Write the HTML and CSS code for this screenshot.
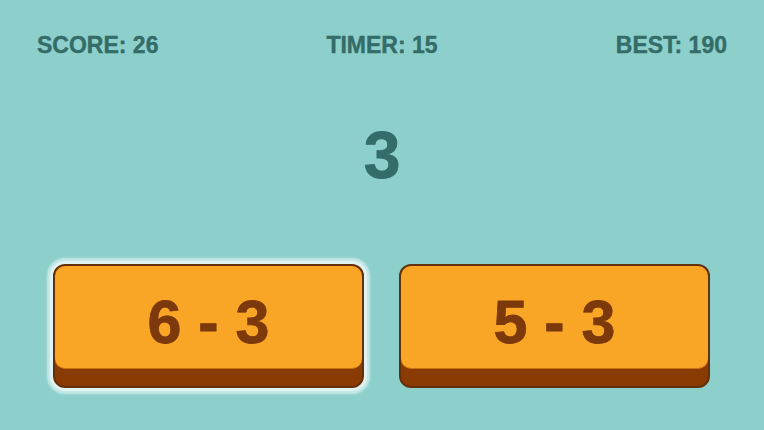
FILE: index.html
```html
<!DOCTYPE html>
<html>
<head>
<meta charset="utf-8">
<link rel="stylesheet" href="styles.css">
</head>
<body>
<div class="game">
  <div class="hud">
    <span class="stat stat-left">SCORE: 26</span>
    <span class="stat stat-mid">TIMER: 15</span>
    <span class="stat stat-right">BEST: 190</span>
  </div>
  <div class="target">3</div>
  <div class="choices">
    <div class="btn selected"><div class="face">6 - 3</div></div>
    <div class="btn"><div class="face">5 - 3</div></div>
  </div>
</div>
</body>
</html>
```
FILE: styles.css
```css
html, body {
  margin: 0;
  padding: 0;
}
body {
  width: 764px;
  height: 430px;
  overflow: hidden;
  background: #8dd0cb;
  font-family: "Liberation Sans", Arial, sans-serif;
}
.game {
  display: flex;
  flex-direction: column;
}
.hud {
  display: grid;
  grid-template-columns: 1fr auto 1fr;
  padding: 34px 37px 0 37px;
}
.stat {
  font-size: 23px;
  line-height: 23px;
  font-weight: bold;
  color: #336c68;
  -webkit-text-stroke: 0.4px #336c68;
}
.stat-left { justify-self: start; }
.stat-mid { justify-self: center; }
.stat-right { justify-self: end; }
.target {
  margin-top: 65px;
  text-align: center;
  font-size: 66px;
  line-height: 66px;
  font-weight: bold;
  color: #336c68;
  -webkit-text-stroke: 0.8px #336c68;
}
.choices {
  display: flex;
  gap: 35px;
  padding: 0 54px 0 53px;
  margin-top: 76px;
}
.btn {
  flex: 1;
  background: #8a3a03;
  border: 2px solid #643008;
  border-radius: 12px;
  padding-bottom: 17px;
}
.btn.selected {
  box-shadow: 0 0 0 3px #e0f3f2, 0 0 2px 6px rgba(200, 234, 232, 0.95);
}
.face {
  height: 103px;
  background: #f9a626;
  border-radius: 10px;
  display: flex;
  align-items: center;
  justify-content: center;
  padding-top: 10px;
  box-sizing: border-box;
  font-size: 61px;
  line-height: 61px;
  font-weight: bold;
  color: #7c390b;
  -webkit-text-stroke: 0.8px #7c390b;
  border-bottom: 1px solid #c9700f;
}
```
